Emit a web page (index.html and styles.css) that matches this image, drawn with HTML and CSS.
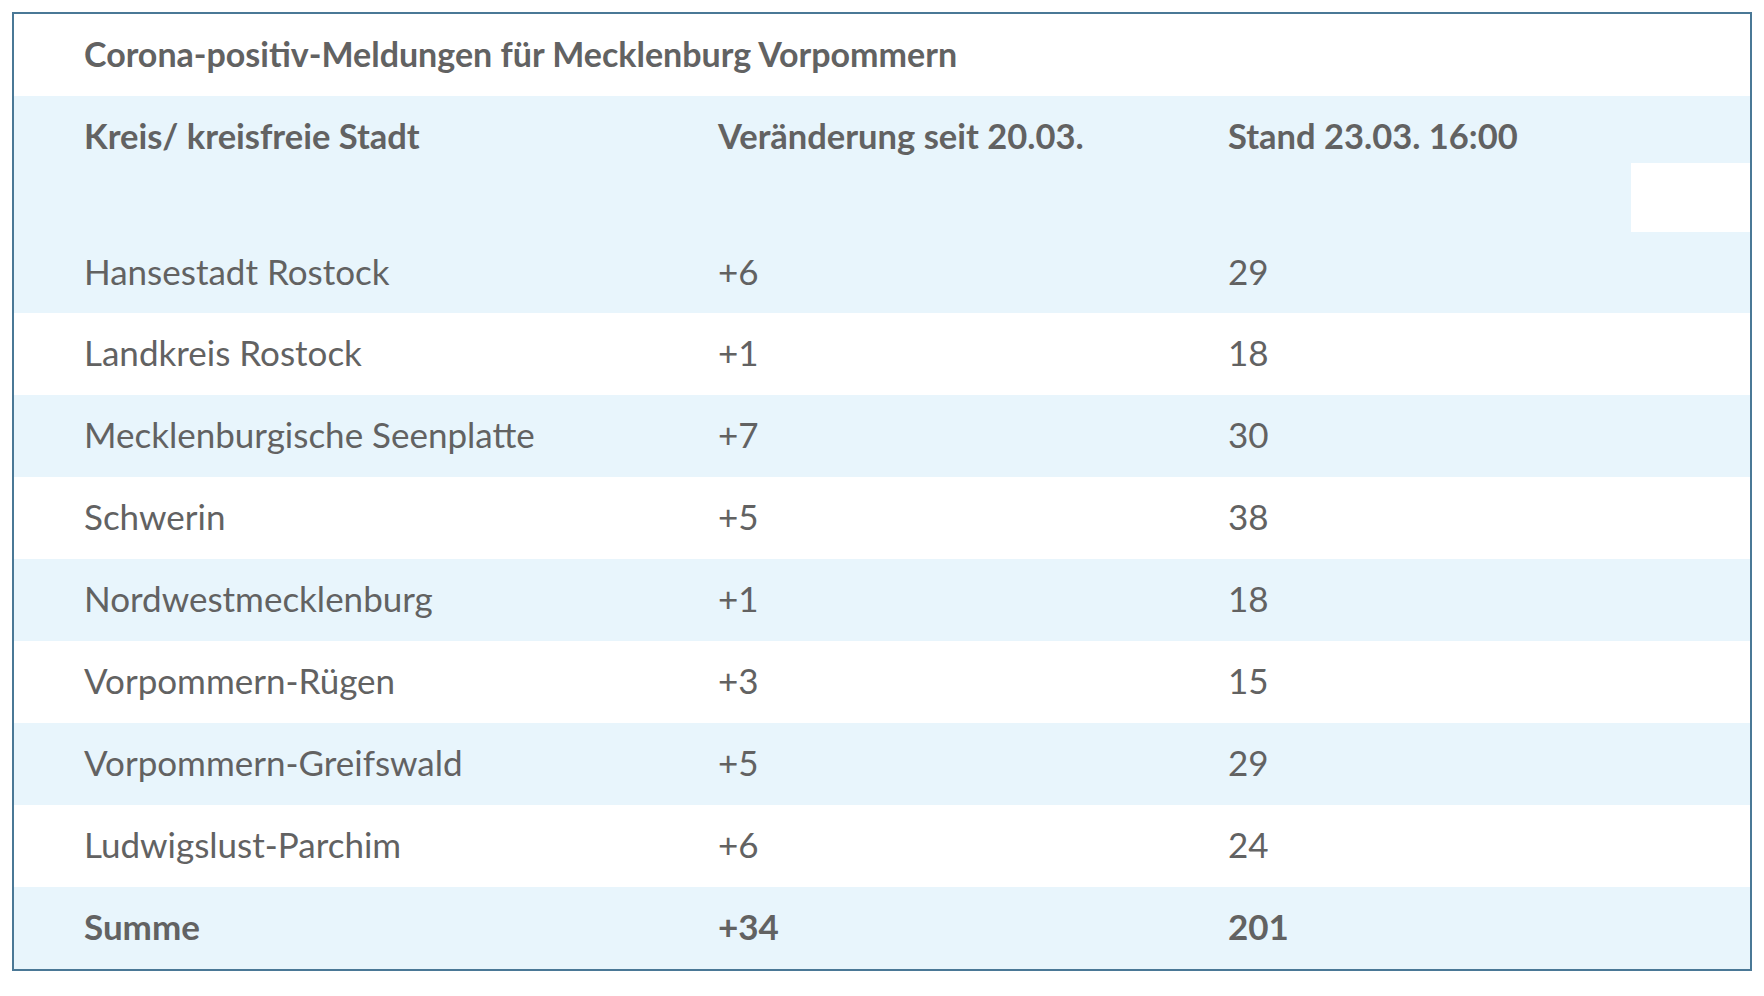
FILE: index.html
```html
<!DOCTYPE html>
<html lang="de">
<head>
<meta charset="utf-8">
<title>Corona-positiv-Meldungen</title>
<link rel="stylesheet" href="styles.css">
</head>
<body>
<div class="table">
  <div class="title">Corona-positiv-Meldungen für Mecklenburg Vorpommern</div>
  <div class="row head">
    <div class="cell">Kreis/ kreisfreie Stadt</div>
    <div class="cell">Veränderung seit 20.03.</div>
    <div class="cell">Stand 23.03. 16:00</div>
    <div class="cell"></div>
  </div>
  <div class="row head2">
    <div class="cell"></div>
    <div class="cell"></div>
    <div class="cell"></div>
    <div class="cell blank"></div>
  </div>
  <div class="row alt first">
    <div class="cell">Hansestadt Rostock</div><div class="cell">+6</div><div class="cell">29</div><div class="cell"></div>
  </div>
  <div class="row">
    <div class="cell">Landkreis Rostock</div><div class="cell">+1</div><div class="cell">18</div><div class="cell"></div>
  </div>
  <div class="row alt">
    <div class="cell">Mecklenburgische Seenplatte</div><div class="cell">+7</div><div class="cell">30</div><div class="cell"></div>
  </div>
  <div class="row">
    <div class="cell">Schwerin</div><div class="cell">+5</div><div class="cell">38</div><div class="cell"></div>
  </div>
  <div class="row alt">
    <div class="cell">Nordwestmecklenburg</div><div class="cell">+1</div><div class="cell">18</div><div class="cell"></div>
  </div>
  <div class="row">
    <div class="cell">Vorpommern-Rügen</div><div class="cell">+3</div><div class="cell">15</div><div class="cell"></div>
  </div>
  <div class="row alt">
    <div class="cell">Vorpommern-Greifswald</div><div class="cell">+5</div><div class="cell">29</div><div class="cell"></div>
  </div>
  <div class="row">
    <div class="cell">Ludwigslust-Parchim</div><div class="cell">+6</div><div class="cell">24</div><div class="cell"></div>
  </div>
  <div class="row alt total">
    <div class="cell">Summe</div><div class="cell">+34</div><div class="cell">201</div><div class="cell"></div>
  </div>
</div>
</body>
</html>
```

FILE: styles.css
```css
html, body {
  margin: 0;
  padding: 0;
  background: #ffffff;
}

body {
  padding: 12px 0 0 12px;
  font-family: Lato, "PT Sans", "Open Sans", sans-serif;
  color: #626262;
}

.table {
  box-sizing: border-box;
  width: 1740px;
  border: 2px solid #4a7896;
  background: #ffffff;
}

.title {
  box-sizing: border-box;
  height: 82px;
  padding: 0 0 4px 70px;
  display: flex;
  align-items: center;
  font-size: 34px;
  font-weight: 700;
}

.row {
  box-sizing: border-box;
  display: grid;
  grid-template-columns: 634px 510px 403px 1fr;
  padding: 0 0 4px 70px;
  height: 82px;
  align-items: center;
  font-size: 35px;
}

.row.alt,
.row.head,
.row.head2 {
  background: #e8f5fc;
}

.row.head {
  height: 67px;
  padding-top: 11px;
  padding-bottom: 0;
  font-size: 34.5px;
  font-weight: 700;
}

.row.head2 {
  height: 69px;
  padding-bottom: 0;
  align-items: stretch;
}

.row.head2 .blank {
  background: #ffffff;
}

.row.first {
  height: 81px;
}

.row.total {
  font-weight: 700;
}

.cell {
  white-space: nowrap;
}
```
